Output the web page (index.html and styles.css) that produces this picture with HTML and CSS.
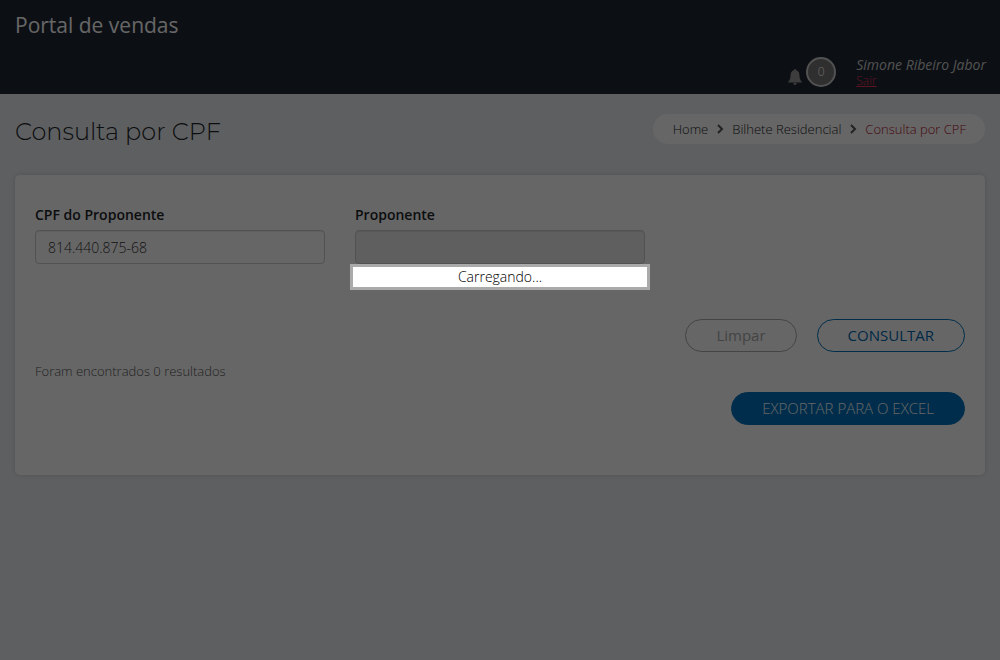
FILE: index.html
```
<!DOCTYPE html>
<html lang="pt-BR">
<head>
<meta charset="utf-8">
<meta name="viewport" content="width=device-width, initial-scale=1">
<title>Consulta por CPF</title>
<link rel="stylesheet" href="styles.css">
</head>
<body>
<header class="topbar">
  <div class="brand">Portal de vendas</div>
  <div class="account">
    <div class="notifications">
      <svg class="bell" viewBox="0 0 14 16" aria-hidden="true"><path d="M7 0c.7 0 1 .5 1 1.200C10.300 1.700 11.300 3.500 11.400 6c.1 3.500.8 5.200 2.300 6.700v.8H.3v-.8C1.800 11.200 2.500 9.500 2.600 6 2.700 3.500 3.700 1.700 6 1.200 6 .5 6.300 0 7 0zM5.400 14h3.200c0 1.200-.6 2-1.600 2s-1.600-.8-1.600-2z"/></svg>
      <span class="count">0</span>
    </div>
    <div class="user">
      <em class="user-name">Simone Ribeiro Jabor</em>
      <a class="logout" href="#">Sair</a>
    </div>
  </div>
</header>
<main class="page">
  <div class="page-head">
    <h1 class="title">Consulta por CPF</h1>
    <nav class="breadcrumb" aria-label="Navegação">
      <a class="crumb" href="#">Home</a>
      <svg class="chevron" viewBox="0 0 8 10" aria-hidden="true"><path d="M2 1l4 4-4 4"/></svg>
      <a class="crumb" href="#">Bilhete Residencial</a>
      <svg class="chevron" viewBox="0 0 8 10" aria-hidden="true"><path d="M2 1l4 4-4 4"/></svg>
      <a class="crumb current" href="#" aria-current="page">Consulta por CPF</a>
    </nav>
  </div>
  <section class="card">
    <div class="fields">
      <div class="field">
        <label class="label" for="cpf">CPF do Proponente</label>
        <input class="input" id="cpf" type="text" value="814.440.875-68">
      </div>
      <div class="field">
        <label class="label" for="proponente">Proponente</label>
        <input class="input" id="proponente" type="text" disabled>
      </div>
    </div>
    <div class="actions">
      <button class="button muted" type="button">Limpar</button>
      <button class="button outline" type="button">CONSULTAR</button>
    </div>
    <p class="results">Foram encontrados 0 resultados</p>
    <div class="actions">
      <button class="button solid" type="button">EXPORTAR PARA O EXCEL</button>
    </div>
  </section>
</main>
<div class="overlay"></div>
<div class="loading" role="status">Carregando...</div>
</body>
</html>
```
FILE: styles.css
```
* { box-sizing: border-box; }

body {
  margin: 0;
  min-height: 100vh;
  background: #ebeef2;
  color: #212529;
  font: 300 13px/20px "Open Sans", "Noto Sans", sans-serif;
}

.topbar {
  display: flex;
  flex-direction: column;
  justify-content: space-between;
  height: 94px;
  padding: 10px 14px 5px 15px;
  background: #1e2632;
}

.brand {
  color: #fff;
  font-size: 21px;
  font-weight: 400;
  line-height: 30px;
}

.account {
  display: flex;
  justify-content: flex-end;
  gap: 20px;
}

.notifications {
  display: flex;
  align-items: flex-start;
  gap: 4px;
}

.bell {
  width: 14px;
  height: 16px;
  margin-top: 12px;
  fill: #999;
}

.count {
  width: 30px;
  height: 30px;
  border: 2px solid #ccc;
  border-radius: 50%;
  background: #777;
  color: #fff;
  font-size: 12px;
  line-height: 26px;
  text-align: center;
}

.user {
  display: flex;
  flex-direction: column;
  align-items: flex-start;
  line-height: 16px;
}

.user-name { color: #ccc; font-size: 14px; font-weight: 400; }

.logout { color: #e8365a; font-size: 12px; }

.page { padding: 20px 15px; }

.page-head {
  display: flex;
  align-items: flex-start;
  justify-content: space-between;
  margin-bottom: 25px;
}

.title {
  margin: 0;
  font: 300 24px/36px Montserrat, Inter, sans-serif;
}

.breadcrumb {
  display: flex;
  align-items: center;
  gap: 8px;
  height: 30px;
  padding: 0 19px 0 20px;
  border-radius: 15px;
  background: #fff;
}

.crumb { color: #212529; text-decoration: none; }

.current { color: #b00c28; }

.chevron {
  width: 8px;
  height: 10px;
  fill: none;
  stroke: #555;
  stroke-width: 2;
}

.card {
  padding: 30px 20px 50px;
  border-radius: 5px;
  background: #fff;
  box-shadow: 0 0 5px rgba(0, 0, 0, 0.15);
}

.fields {
  display: grid;
  grid-template-columns: repeat(3, 1fr);
  gap: 30px;
  margin-bottom: 55px;
}

.label {
  display: block;
  margin-bottom: 5px;
  font-size: 14px;
  font-weight: 600;
}

.input {
  display: block;
  width: 100%;
  height: 34px;
  padding: 0 12px;
  border: 1px solid #ccc;
  border-radius: 4px;
  background: #fff;
  box-shadow: inset 0 1px 1px rgba(0, 0, 0, 0.08);
  color: #333;
  font: inherit;
  font-size: 14px;
}

.input:disabled { background: #eee; }

.actions {
  display: flex;
  justify-content: flex-end;
  gap: 20px;
}

.button {
  height: 33px;
  padding: 0 30px 2px;
  border: 1px solid #0072bc;
  border-radius: 17px;
  background: #fff;
  color: #0067b1;
  font: inherit;
  font-size: 15px;
  font-weight: 400;
}

.muted { border-color: #aaa; color: #aaa; }

.solid { background: #0072bc; color: #fff; font-weight: 300; }

.results { margin: 9px 0 11px; color: #555; }

.overlay {
  position: fixed;
  inset: 0;
  background: rgba(0, 0, 0, 0.6);
}

.loading {
  position: fixed;
  top: 40%;
  left: 35%;
  width: 30%;
  border: 3px solid #aaa;
  background: #fff;
  color: #000;
  font-size: 14px;
  text-align: center;
}
```
